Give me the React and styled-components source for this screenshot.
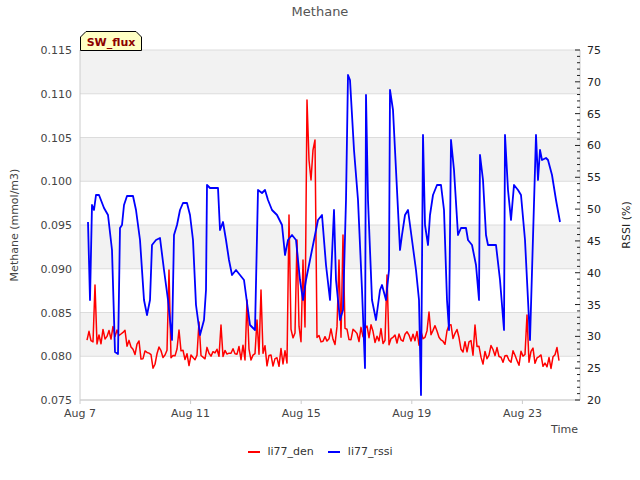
import React from "react";
import styled, { createGlobalStyle } from "styled-components";

const Global = createGlobalStyle`
  html,body{margin:0;padding:0;background:#fff;}
  body{font-family:"DejaVu Sans",sans-serif;}
`;
const Page = styled.div`width:640px;height:480px;display:flex;flex-direction:column;`;
const Chart = styled.svg`display:block;width:640px;height:445px;font-family:"DejaVu Sans",sans-serif;`;
const Legend = styled.div`display:flex;justify-content:center;gap:14px;font-size:11px;color:#333;`;
const Item = styled.div`display:flex;align-items:center;gap:8px;`;
const Swatch = styled.span`width:12px;height:2px;background:${p => p.c};`;

const X0 = 80, X1 = 580, Y0 = 50, Y1 = 400;
const ly = v => Y1 - (v - 0.075) / 0.04 * 350;
const ry = v => Y1 - (v - 20) / 55 * 350;

const blue = [[88,222],[90,300],[92,205],[94,210],[96,195],[99,195],[104,208],[108,215],[112,250],[115,352],[118,354],[120,228],[122,225],[124,205],[127,196],[133,196],[136,210],[140,240],[144,300],[147,315],[150,300],[152,245],[156,240],[160,238],[164,270],[168,300],[172,340],[174,235],[177,225],[180,210],[183,203],[187,203],[190,215],[193,240],[196,305],[200,335],[204,320],[206,290],[207,185],[210,188],[218,188],[220,230],[223,222],[226,240],[229,260],[232,275],[236,270],[240,275],[244,280],[250,325],[255,330],[258,190],[262,193],[265,190],[268,200],[272,210],[277,215],[282,225],[285,255],[288,240],[292,235],[296,240],[300,280],[303,300],[306,280],[310,260],[314,240],[318,220],[322,215],[326,265],[330,300],[334,210],[336,280],[338,300],[340,320],[343,310],[346,200],[348,75],[350,80],[354,150],[358,200],[362,290],[365,368],[366,95],[368,200],[372,300],[376,320],[380,290],[382,285],[386,300],[389,270],[390,90],[393,110],[396,170],[400,250],[402,235],[405,215],[408,210],[412,240],[416,270],[419,300],[421,395],[423,135],[425,225],[428,245],[430,215],[433,195],[437,185],[441,185],[444,210],[447,300],[449,330],[451,140],[454,170],[458,235],[461,228],[466,228],[468,240],[472,245],[476,265],[479,300],[480,155],[483,180],[486,235],[488,245],[492,245],[496,245],[500,280],[504,330],[505,135],[508,190],[511,220],[514,185],[518,190],[521,195],[525,240],[530,340],[536,135],[538,180],[540,150],[542,160],[546,158],[548,160],[552,175],[556,200],[560,222]];

function makeRed() {
  let s = 11;
  const rnd = () => { s = (s * 16807) % 2147483647; return s / 2147483647; };
  const spikes = {95:285,170:270,248:300,262:290,290:215,308:100,310:160,312:180,314:150,316:140,344:235,388:275,430:312,304:260,298:240,340:260,258:320,222:325,200:322,180:330,476:325,528:315};
  const pts = [];
  let base = 345;
  for (let x = 87; x <= 560; x += 2) {
    base += (rnd() - 0.5) * 8;
    base = Math.max(332, Math.min(360, base));
    if (x > 290 && x < 330) base = Math.min(base, 335);
    let y = base + (rnd() - 0.5) * 18;
    const k = spikes[x] || spikes[x + 1];
    if (k) y = k;
    pts.push([x, y]);
  }
  return pts;
}
const red = makeRed();
const pstr = a => a.map(p => p.join(",")).join(" ");

export default function App() {
  const lt = [0.075,0.08,0.085,0.09,0.095,0.1,0.105,0.11,0.115];
  const days = [["Aug 7",80],["Aug 11",190.6],["Aug 15",301.2],["Aug 19",411.8],["Aug 23",522.4]];
  return (
    <Page>
      <Global />
      <Chart viewBox="0 0 640 445">
        <text x="320" y="16" textAnchor="middle" fontSize="13" fill="#555">Methane</text>
        {[0.11,0.1,0.09,0.08].map(v => (
          <rect key={v} x={X0} y={ly(v+0.005)} width={X1-X0} height={ly(v)-ly(v+0.005)} fill="#f2f2f2" />
        ))}
        {lt.map(v => <line key={v} x1={X0} x2={X1} y1={ly(v)} y2={ly(v)} stroke="#dcdcdc" strokeWidth="1" />)}
        <line x1={X0} x2={X0} y1={Y0} y2={Y1} stroke="#ccc" />
        <line x1={X1} x2={X1} y1={Y0} y2={Y1} stroke="#ccc" />
        <line x1={X0} x2={X1} y1={Y1} y2={Y1} stroke="#ccc" />
        {lt.map(v => <text key={v} x="72" y={ly(v)+4} textAnchor="end" fontSize="11" fill="#444">{v.toFixed(3)}</text>)}
        {Array.from({length:56}, (_, i) => 20 + i).map(v => (
          <line key={v} x1={v % 5 === 0 ? X1-5 : X1-3} x2={X1} y1={ry(v)} y2={ry(v)} stroke="#222" />
        ))}
        {[20,25,30,35,40,45,50,55,60,65,70,75].map(v => <text key={v} x="587" y={ry(v)+4} fontSize="11" fill="#222">{v}</text>)}
        {days.map(([t,x]) => (
          <g key={t}>
            <line x1={x} x2={x} y1={Y1} y2={Y1+4} stroke="#ccc" />
            <text x={x} y="417" textAnchor="middle" fontSize="11" fill="#444">{t}</text>
          </g>
        ))}
        <text x="578" y="433" textAnchor="end" fontSize="11" fill="#444">Time</text>
        <text transform="translate(18,225) rotate(-90)" textAnchor="middle" fontSize="11" fill="#444">Methane (mmol/m3)</text>
        <text transform="translate(630,225) rotate(-90)" textAnchor="middle" fontSize="11" fill="#222">RSSI (%)</text>
        <polyline points={pstr(red)} fill="none" stroke="#f00" strokeWidth="1.5" strokeLinejoin="round" />
        <polyline points={pstr(blue)} fill="none" stroke="#00f" strokeWidth="1.8" strokeLinejoin="round" />
        <path d="M80.5 50.5 V37 L86 31.5 H136 L141.5 37 V50.5 Z" fill="#ffffc4" stroke="#000" />
        <text x="111" y="46" textAnchor="middle" fontSize="11" fontWeight="bold" fill="#8b0000">SW_flux</text>
      </Chart>
      <Legend>
        <Item><Swatch c="#f00" />li77_den</Item>
        <Item><Swatch c="#00f" />li77_rssi</Item>
      </Legend>
    </Page>
  );
}
